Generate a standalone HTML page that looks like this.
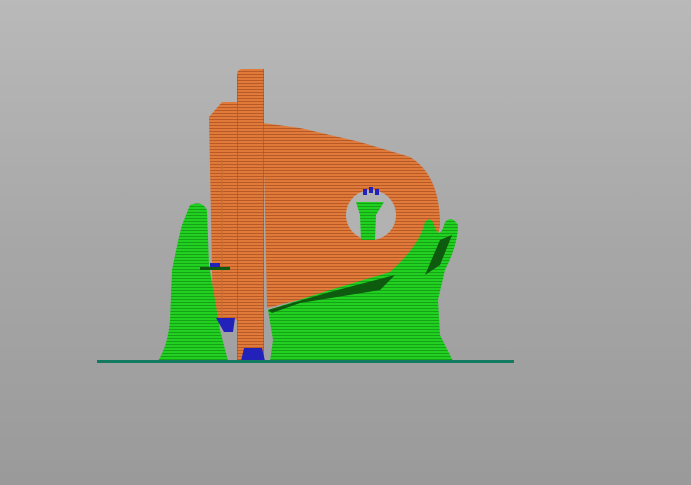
<!DOCTYPE html>
<html><head><style>
html,body{margin:0;padding:0;width:691px;height:485px;overflow:hidden}
body{background:linear-gradient(#b9b9b9,#a7a7a7 50%,#9a9a9a)}
svg{position:absolute;left:0;top:0}
</style></head><body>
<svg width="691" height="485" viewBox="0 0 691 485">
<defs>
<pattern id="o" width="4" height="3" patternUnits="userSpaceOnUse"><rect width="4" height="3" fill="#e07a3a"/><rect y="2" width="4" height="1" fill="#b85a26"/></pattern>
<pattern id="g" width="4" height="3" patternUnits="userSpaceOnUse"><rect width="4" height="3" fill="#22d022"/><rect y="2" width="4" height="1" fill="#16a216"/></pattern>
</defs>
<path d="M209,117 L222,102 L237,102 L237,320 L213,320 Z" fill="url(#o)"/>
<rect x="221" y="160" width="2" height="160" fill="#c86a30" opacity="0.6"/>
<path d="M263,123 L300,128 L360,142 L410,157 Q440,175 440,225 Q438,250 400,270 L330,292 L267,308 Z" fill="url(#o)"/>
<circle cx="371" cy="215" r="25" fill="#b2b2b2"/>
<path d="M356,202 L384,202 L376,215 L375,240 L361,240 L360,215 Z" fill="url(#g)"/>
<rect x="363" y="189" width="4" height="6" fill="#2222bb"/><rect x="369" y="187" width="4" height="6" fill="#2222bb"/><rect x="375" y="189" width="4" height="6" fill="#2222bb"/>
<path d="M190,205 Q202,200 207,210 L209,265 L215,300 L220,330 L228,361 L158,361 Q168,345 170,320 L172,270 Q178,240 182,225 Z" fill="url(#g)"/>
<rect x="200" y="267" width="30" height="3" fill="#0e5a0e"/>
<rect x="210" y="263" width="10" height="4" fill="#2222bb"/>
<path d="M216,318 L235,318 L233,332 L224,332 Z" fill="#2222bb"/>
<path d="M268,310 L330,290 L390,272 Q420,245 425,222 Q432,215 435,228 Q440,240 445,222 Q452,215 458,225 Q458,245 445,270 L438,300 L440,335 L453,361 L270,361 L273,340 Z" fill="url(#g)"/>
<path d="M268,310 L330,292 L395,275 L380,290 L300,303 L272,313 Z" fill="#0e5a0e"/>
<path d="M440,240 L452,235 L440,265 L425,275 Z" fill="#0e5a0e"/>
<path d="M237,75 Q237,69 243,69 L264,69 L264,361 L237,361 Z" fill="url(#o)"/>
<rect x="237" y="75" width="1" height="286" fill="#a85020" opacity="0.6"/>
<rect x="263" y="69" width="1" height="292" fill="#a85020" opacity="0.6"/>
<path d="M244,348 L262,348 L265,361 L241,361 Z" fill="#2222bb"/>
<rect x="97" y="360" width="417" height="3" fill="#137a62"/>
</svg>
</body></html>
